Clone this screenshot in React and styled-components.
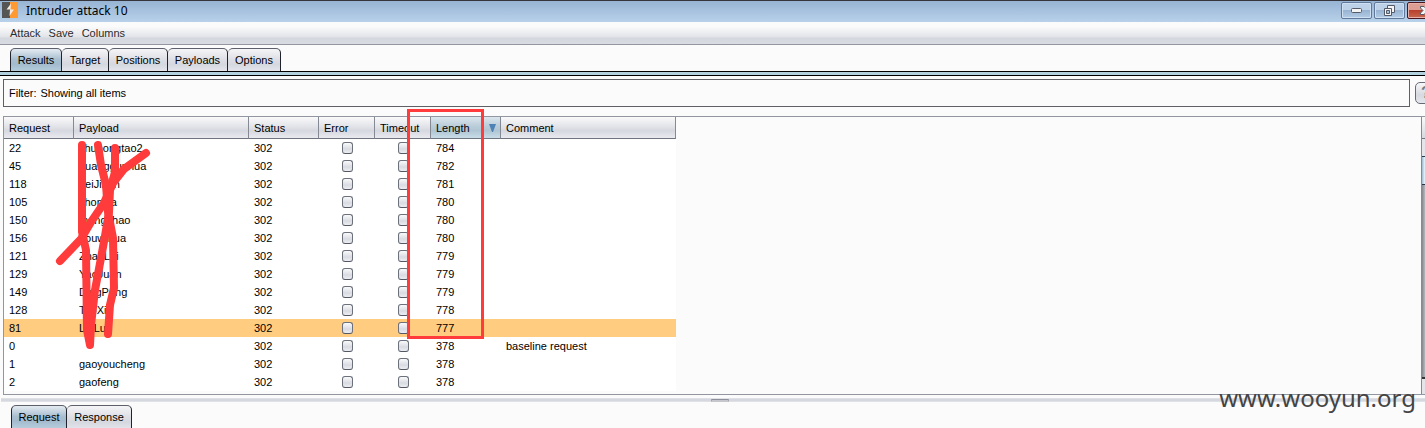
import React from 'react';
import styled, { createGlobalStyle, css } from 'styled-components';

const Global = createGlobalStyle`
  * { box-sizing: border-box; }
  body {
    margin: 0;
    overflow: hidden;
    background: #fbfbfb;
    color: #000;
    font: 11px/18px "Liberation Sans", Arial, sans-serif;
  }
  button, input { font: inherit; color: inherit; margin: 0; }
`;

const Window = styled.div`
  position: relative;
  overflow: hidden;
  height: 100vh;
  display: flex;
  flex-direction: column;
`;

const TitleBar = styled.header`
  display: flex;
  align-items: flex-start;
  flex: none;
  height: 22px;
  padding: 1px 0 0 2px;
  border-top: 1px solid #35353b;
  background: linear-gradient(#97b4d4, #b9d1ea);
`;

const Title = styled.h1`
  flex: 1;
  margin: 0 0 0 8px;
  font: 12px/18px "Noto Sans", sans-serif;
`;

const WindowButtons = styled.div`
  display: flex;
  gap: 2px;
  margin-right: -20px;
`;

const WindowButton = styled.button`
  display: grid;
  place-items: center;
  width: ${(p) => (p.$close ? 38 : 31)}px;
  height: 17px;
  padding: 0;
  border: 1px solid ${(p) => (p.$close ? '#4a1620' : '#61789a')};
  border-radius: 2px;
  box-shadow: inset 0 0 0 1px ${(p) => (p.$close ? '#e7b0a8' : '#cfe0f2')};
  background: ${(p) =>
    p.$close
      ? 'linear-gradient(#dc9d92 45%, #b8402c 50%, #c9694f)'
      : 'linear-gradient(#bdd2e9 45%, #98b4d2 50%, #b3cce6)'};
`;

const MenuBar = styled.nav`
  display: flex;
  align-items: center;
  gap: 8px;
  flex: none;
  height: 23px;
  padding-left: 10px;
  border-bottom: 1px solid #9296a1;
  background: linear-gradient(#fbfbfb 20%, #e3e5ea 65%, #d4d7de 75%, #d9dbe1);
`;

const MenuItem = styled.button`
  padding: 0;
  border: 0;
  background: none;
  color: #2b2b2b;
`;

const TabList = styled.div`
  display: flex;
  flex: none;
  padding: ${(p) => (p.$bottom ? '3px 0 0 11px' : '3px 0 0 10px')};
`;

const Tab = styled.button`
  width: ${(p) => p.$width}px;
  height: 24px;
  padding: 0 0 ${(p) => (p.$bottom || p.$active ? 1 : 0)}px;
  white-space: nowrap;
  border: 1px solid #20232c;
  border-top-color: #5d606a;
  border-left-width: ${(p) => (p.$first ? 1 : 0)}px;
  border-bottom: ${(p) => (p.$bottom || p.$active ? 0 : 1)}px solid #000;
  border-radius: 5px 5px 0 0;
  background: ${(p) =>
    p.$active
      ? 'linear-gradient(#e4ebf1, #a9bfd1 45%, #a3bacd 65%, #b6cfde)'
      : 'linear-gradient(#f5f5f7, #dfe0e6 45%, #d6d8df 70%, #e4e5ec)'};
`;

const TabStripe = styled.div`
  flex: none;
  height: 5px;
  margin-top: -1px;
  border: solid #000;
  border-width: 1px 0;
  background: #b3d0de;
`;

const FilterRow = styled.div`
  display: flex;
  align-items: center;
  gap: 5px;
  flex: none;
  margin: 3px -15px 0 3px;
`;

const FilterButton = styled.button`
  display: flex;
  align-items: center;
  gap: 4px;
  flex: 1;
  height: 28px;
  padding: 0 5px;
  border: 1px solid #5f6066;
  background: #fbfbfb;
`;

const HelpButton = styled.button`
  width: 25px;
  height: 22px;
  padding: 0 0 0 5px;
  text-align: left;
  border: 1px solid #686b74;
  border-radius: 5px;
  color: #777b84;
  font-size: 16px;
  font-weight: bold;
  background: linear-gradient(#f8f8fa, #d7d9e0 60%, #e6e7ee);
`;

const TablePane = styled.section`
  display: flex;
  justify-content: space-between;
  flex: none;
  height: 279px;
  margin: 9px 0 0 3px;
  border: solid #9296a1;
  border-width: 1px 0 1px 1px;
`;

const Table = styled.table`
  width: 672px;
  height: 274px;
  table-layout: fixed;
  border-collapse: separate;
  border-spacing: 0;
`;

const HeadCell = styled.th`
  height: 22px;
  padding: 0 4px 0 5px;
  text-align: left;
  font-weight: normal;
  white-space: nowrap;
  border-right: 1px solid #858994;
  border-bottom: 1px solid #70747e;
  background: ${(p) =>
    p.$sorted
      ? 'linear-gradient(#dbe6ec, #b9ccd9 45%, #b0c5d3 65%, #c8dde8)'
      : 'linear-gradient(#fafafb, #e0e1e7 50%, #d6d8df 65%, #e9eaf0)'};
`;

const HeadContent = styled.span`
  display: flex;
  align-items: center;
  justify-content: space-between;
`;

const Row = styled.tr`
  background: ${(p) => (p.$highlight ? '#ffcc80' : '#fff')};
`;

const Cell = styled.td`
  height: 18px;
  padding: 0 5px;
  line-height: 18px;
  white-space: nowrap;
  ${(p) => p.$center && css`padding: 0 0 0 1px; text-align: center;`}
`;

const CheckBox = styled.input`
  appearance: none;
  display: block;
  width: 11px;
  height: 12px;
  margin: 0 auto;
  border: 1px solid #6c707b;
  border-bottom-color: #545863;
  border-radius: 3px;
  background: linear-gradient(#fafafb, #d9dbe2 60%, #eceef3);
`;

const ScrollBar = styled.div`
  display: flex;
  flex-direction: column;
  width: 4px;
  border-left: 1px solid #858994;
  background: linear-gradient(90deg, #85878d, #b7b8bd);
`;

const ScrollCorner = styled.div`
  height: 22px;
  border-bottom: 1px solid #70747e;
  background: linear-gradient(#fafafb, #d6d8df);
`;

const ScrollButton = styled.div`
  height: 17px;
  margin-top: ${(p) => (p.$end ? 'auto' : 0)};
  border-top: ${(p) => (p.$end ? 2 : 0)}px solid #333;
  background: #e5e5e9;
`;

const ScrollThumb = styled.div`
  height: 29px;
  border: solid #24384f;
  border-width: 1px 0;
  background: linear-gradient(90deg, #9ebbd0, #edf7ff);
`;

const Splitter = styled.div`
  display: grid;
  place-items: center;
  flex: none;
  height: 4px;
  margin: 3px 0 0 1px;
  background: linear-gradient(#e6e7ec, #d5d8df 30%, #d5d8df 70%, #e6e7ec);
`;

const Grip = styled.div`
  width: 18px;
  height: 3px;
  margin-left: 14px;
  border: 1px solid #a5a8b0;
  border-top-color: #8d9099;
  border-bottom-color: #c5c7cc;
  border-radius: 1px;
  background: #c5c7cc;
`;

const Marks = styled.svg`
  position: absolute;
  top: 0;
  left: 0;
  pointer-events: none;
`;

const Watermark = styled.div`
  position: absolute;
  right: 9px;
  bottom: 12px;
  color: #444;
  font: 24px/36px "Noto Sans", sans-serif;
`;

const columns = [
  ['Request', 70], ['Payload', 175], ['Status', 70], ['Error', 56],
  ['Timeout', 56], ['Length', 70], ['Comment', 175],
];

const rows = [
  [22, 'zhuhongtao2', 784], [45, 'huanggunhua', 782], [118, 'LeiJihan', 781],
  [105, 'zhonxia', 780], [150, 'mengchao', 780], [156, 'houwihua', 780],
  [121, 'ZhaoLei', 779], [129, 'YaoJuan', 779], [149, 'DingPeng', 779],
  [128, 'TaoXin', 778], [81, 'LiuLun', 777], [0, '', 378, 'baseline request'],
  [1, 'gaoyoucheng', 378], [2, 'gaofeng', 378],
];

const tabs = [['Results', 52], ['Target', 47], ['Positions', 59], ['Payloads', 60], ['Options', 53]];

const Logo = () => (
  <svg width="16" height="16" viewBox="0 0 16 16" aria-hidden="true">
    <path d="M0 0h8v16H0z" fill="#555" />
    <path d="M8 0h8v16H8z" fill="#ff9a33" />
    <path d="M9 1.500 4.500 7.500H8L7.500 14 12 7.500H8.500z" fill="#f4ece4" />
  </svg>
);

const Minimize = () => (
  <svg width="12" height="6" viewBox="0 0 12 6" aria-hidden="true">
    <rect x=".5" y=".5" width="10" height="4" rx="1" fill="#f4f4f4" stroke="#555a68" />
  </svg>
);

const Restore = () => (
  <svg width="13" height="12" viewBox="0 0 13 12" aria-hidden="true">
    <path d="M4.500.5h7v7h-7z" fill="#f4f4f4" stroke="#555a68" />
    <path d="M1.500 3.500h7v7h-7z" fill="#f4f4f4" stroke="#555a68" />
    <path d="M3.500 5.500h3v3h-3z" fill="#a9c3df" stroke="#555a68" />
  </svg>
);

const Close = () => (
  <svg width="14" height="11" viewBox="0 0 14 11" aria-hidden="true">
    <path
      d="M1.500 1.500h3.500l2 2 2-2h3.500v1.500L10 5.500 12.500 8v1.500H9l-2-2-2 2H1.500V8L4 5.500 1.500 3z"
      fill="#f4f4f4"
      stroke="#555a68"
    />
  </svg>
);

export default function App() {
  return (
    <Window>
      <Global />
      <TitleBar>
        <Logo />
        <Title>Intruder attack 10</Title>
        <WindowButtons>
          <WindowButton aria-label="Minimize"><Minimize /></WindowButton>
          <WindowButton aria-label="Restore"><Restore /></WindowButton>
          <WindowButton $close aria-label="Close"><Close /></WindowButton>
        </WindowButtons>
      </TitleBar>
      <MenuBar>
        {['Attack', 'Save', 'Columns'].map((m) => <MenuItem key={m}>{m}</MenuItem>)}
      </MenuBar>
      <TabList role="tablist">
        {tabs.map(([name, width], i) => (
          <Tab key={name} role="tab" aria-selected={i === 0} $first={i === 0} $active={i === 0} $width={width}>
            {name}
          </Tab>
        ))}
      </TabList>
      <TabStripe />
      <FilterRow>
        <FilterButton>
          <span>Filter:</span>
          <span>Showing all items</span>
        </FilterButton>
        <HelpButton aria-label="Help">?</HelpButton>
      </FilterRow>
      <TablePane>
        <Table>
          <colgroup>
            {columns.map(([name, width]) => <col key={name} width={width} />)}
          </colgroup>
          <thead>
            <tr>
              {columns.map(([name]) => (
                <HeadCell key={name} $sorted={name === 'Length'}>
                  <HeadContent>
                    {name}
                    {name === 'Length' && (
                      <svg width="7" height="8" viewBox="0 0 7 8" aria-hidden="true">
                        <path d="M0 0h7L4 8H3z" fill="#4f83b5" />
                      </svg>
                    )}
                  </HeadContent>
                </HeadCell>
              ))}
            </tr>
          </thead>
          <tbody>
            {rows.map(([id, payload, length, comment]) => (
              <Row key={id} $highlight={id === 81}>
                <Cell>{id}</Cell>
                <Cell>{payload}</Cell>
                <Cell>302</Cell>
                <Cell $center><CheckBox type="checkbox" aria-label={`Error ${id}`} /></Cell>
                <Cell $center><CheckBox type="checkbox" aria-label={`Timeout ${id}`} /></Cell>
                <Cell>{length}</Cell>
                <Cell>{comment}</Cell>
              </Row>
            ))}
          </tbody>
        </Table>
        <ScrollBar>
          <ScrollCorner />
          <ScrollButton />
          <ScrollThumb />
          <ScrollButton $end />
        </ScrollBar>
      </TablePane>
      <Splitter><Grip /></Splitter>
      <TabList role="tablist" $bottom>
        <Tab role="tab" aria-selected $first $active $bottom $width={56}>Request</Tab>
        <Tab role="tab" aria-selected={false} $bottom $width={65}>Response</Tab>
      </TabList>
      <Marks width="500" height="360" viewBox="0 0 500 360" fill="none" stroke="#ff3b3b" aria-hidden="true">
        <path d="M408.500 110.500h74v227h-74z" strokeWidth="3" />
        <g strokeWidth="8" strokeLinecap="round" strokeLinejoin="round">
          <path d="M82 145V232L86 250L87 330L90 345L91 325L95 290L101 258L105 236L109 212L110 190L115 172V148" />
          <path d="M98 145L101 165L106 185L108 212L113 238L114 288L110 305L108 334" />
          <path d="M146 153L124 169L113 183L104 203L91 222L81 239L60 261" />
        </g>
      </Marks>
      <Watermark>www.wooyun.org</Watermark>
    </Window>
  );
}
